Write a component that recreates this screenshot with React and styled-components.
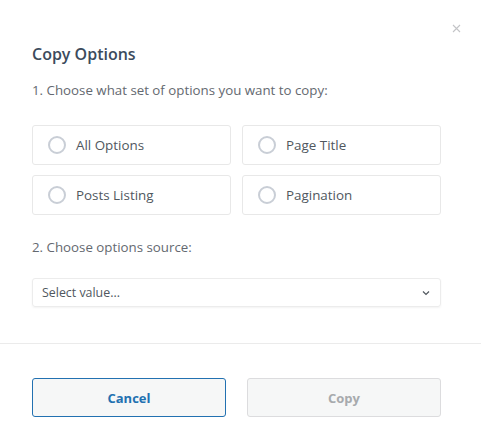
import React, { useState } from 'react';
import styled, { createGlobalStyle } from 'styled-components';

const GlobalStyle = createGlobalStyle`
  html, body {
    margin: 0;
    padding: 0;
    background: #ffffff;
  }
  body {
    font-family: "Open Sans", "Noto Sans", sans-serif;
  }
`;

const sets = ['All Options', 'Page Title', 'Posts Listing', 'Pagination'];

const App = () => {
  const [picked, setPicked] = useState(null);

  return (
    <>
      <GlobalStyle />
      <Modal>
        <CloseButton aria-label="Close">
          <svg width="9" height="9" viewBox="0 0 9 9">
            <path d="M1 1L8 8M8 1L1 8" stroke="#c3c4c7" strokeWidth="1.1" />
          </svg>
        </CloseButton>
        <Body>
          <Title>Copy Options</Title>
          <StepLabel>1. Choose what set of options you want to copy:</StepLabel>
          <OptionGrid>
            {sets.map((name) => (
              <OptionCard key={name} onClick={() => setPicked(name)}>
                <Radio $checked={picked === name} />
                <OptionText>{name}</OptionText>
              </OptionCard>
            ))}
          </OptionGrid>
          <StepLabel $top={22}>2. Choose options source:</StepLabel>
          <SelectBox>
            <SelectText>Select value...</SelectText>
            <svg width="8" height="6" viewBox="0 0 8 6">
              <path d="M1 1.5L4 4.5L7 1.5" fill="none" stroke="#50575e" strokeWidth="1.2" />
            </svg>
          </SelectBox>
        </Body>
        <Footer>
          <Button $primary>Cancel</Button>
          <Button disabled>Copy</Button>
        </Footer>
      </Modal>
    </>
  );
};

export default App;

const Modal = styled.div`
  position: relative;
  width: 481px;
  height: 445px;
  background: #fff;
  box-sizing: border-box;
`;

const CloseButton = styled.button`
  position: absolute;
  top: 22px;
  right: 19px;
  width: 12px;
  height: 12px;
  padding: 0;
  border: 0;
  background: none;
  display: flex;
  align-items: center;
  justify-content: center;
  cursor: pointer;
`;

const Body = styled.div`
  padding: 42px 40px 36px 32px;
  border-bottom: 1px solid #ebebeb;
`;

const Title = styled.h2`
  margin: 0;
  font-size: 16px;
  line-height: 24px;
  font-weight: 600;
  color: #3c4b5c;
`;

const StepLabel = styled.p`
  margin: ${(p) => p.$top || 14}px 0 0;
  font-size: 13.3px;
  line-height: 20px;
  color: #646970;
`;

const OptionGrid = styled.div`
  display: grid;
  grid-template-columns: 1fr 1fr;
  gap: 10px 11px;
  margin-top: 25px;
`;

const OptionCard = styled.label`
  display: flex;
  align-items: center;
  gap: 10px;
  height: 40px;
  padding: 0 15px;
  box-sizing: border-box;
  border: 1px solid #e8e8e8;
  border-radius: 3px;
  cursor: pointer;
`;

const Radio = styled.span`
  width: 18px;
  height: 18px;
  box-sizing: border-box;
  border-radius: 50%;
  border: 2px solid #c9ced6;
  background: ${(p) => (p.$checked ? '#2271b1' : '#fff')};
  flex-shrink: 0;
`;

const OptionText = styled.span`
  font-size: 13.4px;
  color: #50575e;
`;

const SelectBox = styled.div`
  display: flex;
  align-items: center;
  justify-content: space-between;
  margin-top: 21px;
  height: 29px;
  padding: 0 10px 0 9px;
  box-sizing: border-box;
  border: 1px solid #ececec;
  border-radius: 3px;
  box-shadow: 0 1px 2px rgba(0, 0, 0, 0.05);
`;

const SelectText = styled.span`
  font-size: 12.4px;
  color: #50575e;
`;

const Footer = styled.div`
  display: grid;
  grid-template-columns: 194px 194px;
  justify-content: space-between;
  padding: 34px 40px 0 32px;
`;

const Button = styled.button`
  height: 39px;
  border-radius: 3px;
  font-family: inherit;
  font-size: 13px;
  font-weight: 700;
  background: #f6f7f7;
  border: 1px solid ${(p) => (p.$primary ? '#2271b1' : '#dcdcde')};
  color: ${(p) => (p.$primary ? '#2271b1' : '#a7aaad')};
  cursor: ${(p) => (p.disabled ? 'default' : 'pointer')};
`;
